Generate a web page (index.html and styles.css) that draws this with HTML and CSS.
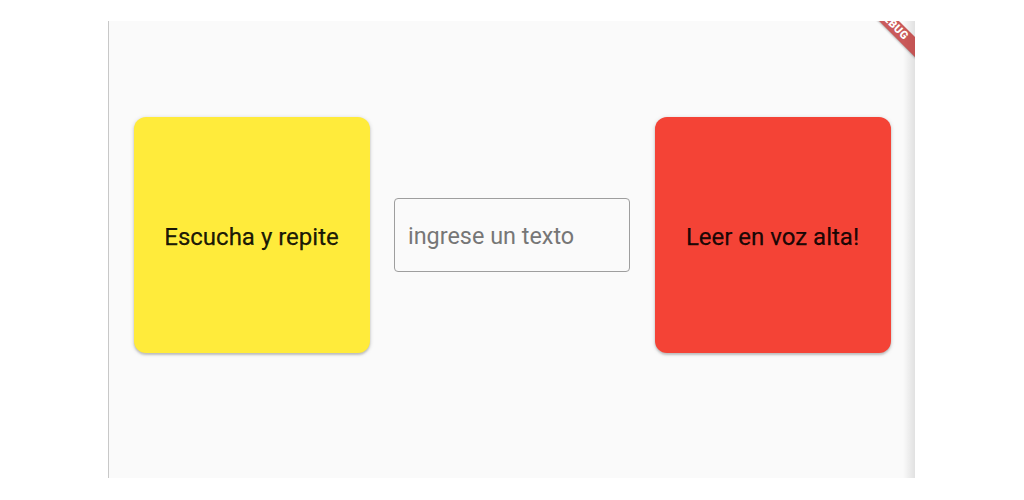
FILE: index.html
```html
<!DOCTYPE html>
<html>
<head>
<meta charset="utf-8">
<link rel="stylesheet" href="styles.css">
</head>
<body>
<div class="frame">
  <div class="row">
    <button class="card card-yellow">Escucha y repite</button>
    <div class="field"><input class="input" type="text" placeholder="ingrese un texto"></div>
    <button class="card card-red">Leer en voz alta!</button>
  </div>
  <div class="edge"></div>
  <div class="banner"><span>DEBUG</span></div>
</div>
</body>
</html>
```
FILE: styles.css
```css
html, body {
  margin: 0;
  padding: 0;
  background: #ffffff;
}
body {
  font-family: Roboto, "Liberation Sans", sans-serif;
}
.frame {
  position: relative;
  margin: 21px 0 0 108px;
  width: 807px;
  height: 457px;
  background: #fafafa;
  border-left: 1px solid #c8c8c8;
  box-sizing: border-box;
  overflow: hidden;
}
.row {
  display: flex;
  justify-content: space-evenly;
  align-items: center;
  height: 100%;
  padding-bottom: 29px;
  box-sizing: border-box;
}
.card {
  width: 236px;
  height: 236px;
  border: none;
  border-radius: 12px;
  font-family: Roboto, "Liberation Sans", sans-serif;
  font-size: 24px;
  font-weight: 400;
  color: rgba(0, 0, 0, 0.9);
  -webkit-text-stroke: 0.25px rgba(0, 0, 0, 0.9);
  box-shadow: 0 2px 2px rgba(0, 0, 0, 0.14), 0 1px 4px rgba(0, 0, 0, 0.18);
  padding: 3px 0 0;
}
.card-yellow { background: #ffeb3b; }
.card-red { background: #f44336; }
.field {
  width: 236px;
  height: 74px;
  border: 1px solid #9e9e9e;
  border-radius: 4px;
  box-sizing: border-box;
  display: flex;
  align-items: center;
  padding: 1px 13px 0;
}
.input {
  border: none;
  outline: none;
  background: transparent;
  width: 100%;
  font-family: Roboto, "Liberation Sans", sans-serif;
  font-size: 23.4px;
  color: #222;
  padding: 0;
}
.input::placeholder {
  color: #767676;
}
.edge {
  position: absolute;
  top: 0;
  right: 0;
  width: 12px;
  height: 100%;
  background: linear-gradient(to right, rgba(0, 0, 0, 0), rgba(0, 0, 0, 0.1));
}
.banner {
  position: absolute;
  top: -3px;
  left: 744px;
  width: 80px;
  height: 14px;
  background: rgba(183, 28, 28, 0.72);
  transform: rotate(45deg);
  display: flex;
  align-items: center;
  justify-content: center;
  box-shadow: 0 1px 2px rgba(0, 0, 0, 0.25);
}
.banner span {
  color: #fff;
  font-size: 11px;
  font-weight: 900;
  letter-spacing: 0.5px;
  line-height: 14px;
}
```
